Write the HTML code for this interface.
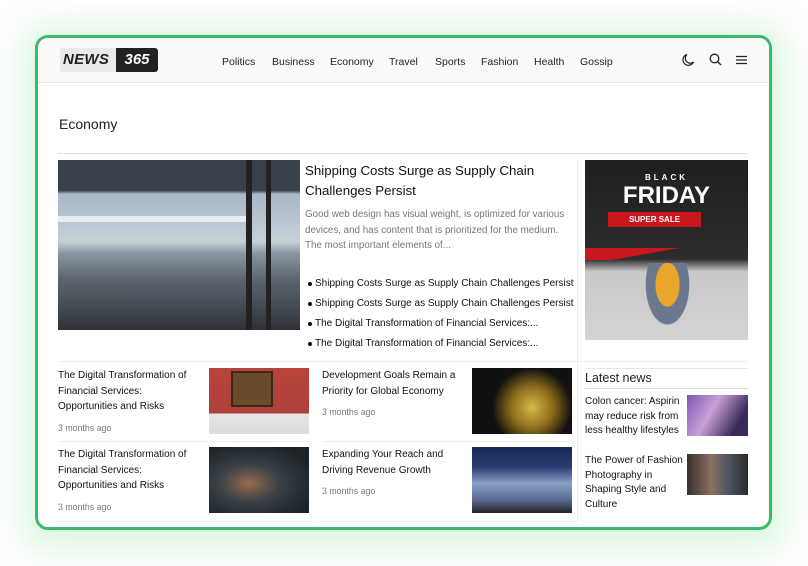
<!DOCTYPE html>
<html><head><meta charset="utf-8"><style>
*{margin:0;padding:0;box-sizing:border-box}
body{width:808px;height:566px;background:#fff;font-family:"Liberation Sans",sans-serif;position:relative;overflow:hidden;color:#111}
.glow{position:absolute;left:20px;top:22px;width:768px;height:530px;border-radius:30px;background:#dff7e4;filter:blur(14px)}
.frame{position:absolute;left:35px;top:35px;width:737px;height:495px;border:3px solid #3cba6c;border-radius:13px;background:#fff;overflow:hidden}
.a{position:absolute}
.hdr{left:0;top:0;width:731px;height:45px;background:#fafafa;border-bottom:1px solid #e4e4e4}
.nav{font-size:10.5px;color:#222;top:18px}
.t{font-size:10px;line-height:15.5px;color:#111}
.g{font-size:8.8px;color:#777}
.img{position:absolute}
.bl{font-size:10px;color:#111;left:277px;white-space:nowrap}
.bl:before{content:"";position:absolute;left:-7px;top:4px;width:4px;height:4px;border-radius:50%;background:#111}
.hl{background:#eee;height:1px;position:absolute}
</style></head><body>
<div class="glow"></div>
<div class="frame">
 <div class="a hdr"></div>
 <div class="a" style="left:22px;top:10px;width:98px;height:24px;background:#eaeaea;border-radius:3px"></div>
 <div class="a" style="left:25px;top:13px;font-size:15px;font-weight:bold;font-style:italic;color:#222;letter-spacing:0.3px">NEWS</div>
 <div class="a" style="left:78px;top:10px;width:42px;height:24px;background:#222;border-radius:0 3px 3px 0;color:#fff;font-size:15px;font-weight:bold;font-style:italic;text-align:center;line-height:24px">365</div>
 <div class="a nav" style="left:184px">Politics</div>
 <div class="a nav" style="left:234px">Business</div>
 <div class="a nav" style="left:292px">Economy</div>
 <div class="a nav" style="left:351px">Travel</div>
 <div class="a nav" style="left:397px">Sports</div>
 <div class="a nav" style="left:443px">Fashion</div>
 <div class="a nav" style="left:496px">Health</div>
 <div class="a nav" style="left:542px">Gossip</div>
 <svg class="a" style="left:643px;top:15px" width="14" height="14" viewBox="0 0 14 14" fill="none" stroke="#222" stroke-width="1.2"><path d="M6 1.5A5.5 5.5 0 1 0 12.5 9 4.5 4.5 0 0 1 6 1.5z"/></svg>
 <svg class="a" style="left:671px;top:15px" width="13" height="13" viewBox="0 0 13 13" fill="none" stroke="#222" stroke-width="1.3"><circle cx="5.5" cy="5.5" r="4.3"/><path d="M8.7 8.7L12 12"/></svg>
 <svg class="a" style="left:698px;top:17px" width="11" height="10" viewBox="0 0 11 10" stroke="#222" stroke-width="1.2"><path d="M0 1.5H11M0 5H11M0 8.5H11"/></svg>

 <div class="a" style="left:21px;top:78px;font-size:14px;color:#222">Economy</div>
 <div class="hl" style="left:20px;top:115px;width:690px;background:#e2e2e2"></div>

 <div class="img" style="left:20px;top:122px;width:242px;height:170px;background:linear-gradient(180deg,#39424a 0%,#39424a 18%,#a9b8c6 20%,#c6d0da 48%,#8b96a2 55%,#5c6670 70%,#2e3338 100%)"></div>
 <div class="img" style="left:20px;top:178px;width:190px;height:6px;background:#e8ecef"></div>
 <div class="img" style="left:208px;top:122px;width:6px;height:170px;background:#222"></div>
 <div class="img" style="left:228px;top:122px;width:5px;height:170px;background:#222"></div>
 <div class="a" style="left:267px;top:123px;width:250px;font-size:13.3px;line-height:20px;color:#111">Shipping Costs Surge as Supply Chain Challenges Persist</div>
 <div class="a" style="left:267px;top:169px;width:272px;font-size:9.8px;line-height:15.5px;color:#777">Good web design has visual weight, is optimized for various devices, and has content that is prioritized for the medium. The most important elements of...</div>
 <div class="a bl" style="top:240px">Shipping Costs Surge as Supply Chain Challenges Persist</div>
 <div class="a bl" style="top:260px">Shipping Costs Surge as Supply Chain Challenges Persist</div>
 <div class="a bl" style="top:280px">The Digital Transformation of Financial Services:...</div>
 <div class="a bl" style="top:300px">The Digital Transformation of Financial Services:...</div>
 <div class="a" style="left:539px;top:122px;width:1px;height:365px;background:#eee"></div>

 <div class="img" style="left:547px;top:122px;width:163px;height:180px;background:linear-gradient(180deg,#1f1f1f 0%,#2c2c2c 55%,#c8c8c8 62%,#d4d4d4 100%)"></div>
 <div class="a" style="left:547px;top:135px;width:163px;text-align:center;color:#fff;font-size:8px;font-weight:bold;letter-spacing:3px">BLACK</div>
 <div class="a" style="left:547px;top:144px;width:163px;text-align:center;color:#fff;font-size:24px;font-weight:bold">FRIDAY</div>
 <div class="a" style="left:570px;top:174px;width:93px;height:15px;background:#c9171e;color:#fff;font-size:8px;font-weight:bold;text-align:center;line-height:15px">SUPER SALE</div>
 <div class="a" style="left:547px;top:210px;width:163px;height:12px;background:linear-gradient(170deg,#c9171e 40%,transparent 42%)"></div>
 <div class="a" style="left:602px;top:225px;width:55px;height:72px;background:radial-gradient(ellipse at 50% 30%,#e9a62a 0 30%,#6a7890 32% 55%,transparent 57%)"></div>

 <div class="hl" style="left:20px;top:323px;width:690px"></div>
 <div class="a t" style="left:20px;top:330px;width:140px">The Digital Transformation of Financial Services: Opportunities and Risks</div>
 <div class="a g" style="left:20px;top:385px">3 months ago</div>
 <div class="img" style="left:171px;top:330px;width:100px;height:66px;background:linear-gradient(180deg,#b8443a 0%,#b0403a 68%,#e6e6e6 70%,#dcdcdc 100%)"></div>
 <div class="img" style="left:193px;top:333px;width:42px;height:36px;background:#6b4a2a;border:2px solid #3a2a18"></div>
 <div class="a t" style="left:284px;top:330px;width:145px">Development Goals Remain a Priority for Global Economy</div>
 <div class="a g" style="left:284px;top:369px">3 months ago</div>
 <div class="img" style="left:434px;top:330px;width:100px;height:66px;background:radial-gradient(circle at 60% 60%,#d8b84a 0,#8a6a1a 30%,#111 55%)"></div>
 <div class="hl" style="left:20px;top:403px;width:250px"></div>
 <div class="hl" style="left:284px;top:403px;width:250px"></div>
 <div class="a t" style="left:20px;top:409px;width:140px">The Digital Transformation of Financial Services: Opportunities and Risks</div>
 <div class="a g" style="left:20px;top:464px">3 months ago</div>
 <div class="img" style="left:171px;top:409px;width:100px;height:66px;background:radial-gradient(ellipse at 40% 55%,#9a6a4a 0,#3a4248 35%,#1c2226 80%)"></div>
 <div class="a t" style="left:284px;top:409px;width:140px">Expanding Your Reach and Driving Revenue Growth</div>
 <div class="a g" style="left:284px;top:448px">3 months ago</div>
 <div class="img" style="left:434px;top:409px;width:100px;height:66px;background:linear-gradient(180deg,#1a2a55 0%,#2a3a70 30%,#8aa0c8 55%,#5a6a90 80%,#222 100%)"></div>
 <div class="hl" style="left:20px;top:483px;width:250px"></div>
 <div class="hl" style="left:284px;top:483px;width:250px"></div>

 <div class="hl" style="left:547px;top:330px;width:163px;background:#e6e6e6"></div>
 <div class="a" style="left:547px;top:333px;font-size:12.5px;color:#222">Latest news</div>
 <div class="hl" style="left:547px;top:350px;width:163px;background:#ddd"></div>
 <div class="a t" style="left:547px;top:357px;width:100px;font-size:10px;line-height:14.5px">Colon cancer: Aspirin may reduce risk from less healthy lifestyles</div>
 <div class="img" style="left:649px;top:357px;width:61px;height:41px;background:linear-gradient(120deg,#7a5ab0,#c9a0d8 40%,#3a2a5a 80%)"></div>
 <div class="a t" style="left:547px;top:416px;width:100px;font-size:10px;line-height:14.5px">The Power of Fashion Photography in Shaping Style and Culture</div>
 <div class="img" style="left:649px;top:416px;width:61px;height:41px;background:linear-gradient(90deg,#3a3030,#8a7060 40%,#4a5260 70%,#2a2a2a)"></div>
</div>
</body></html>
